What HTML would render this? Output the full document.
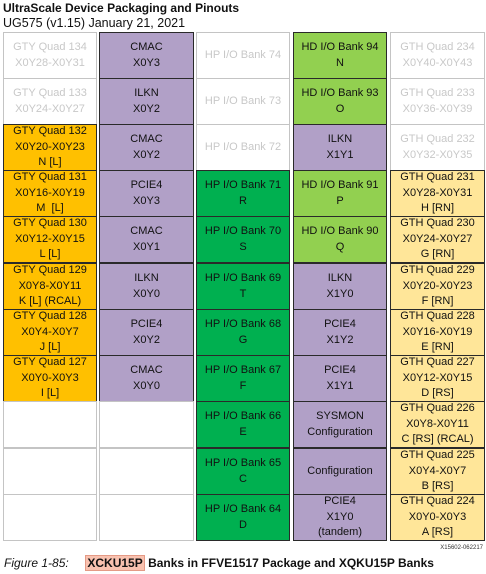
<!DOCTYPE html>
<html><head><meta charset="utf-8"><style>
body{margin:0;width:486px;height:574px;background:#fff;position:relative;overflow:hidden;font-family:"Liberation Sans",Arial,sans-serif}
.h1{position:absolute;left:3px;top:1px;font-size:12px;font-weight:bold;color:#111}
.h2{position:absolute;left:3px;top:16px;font-size:12.5px;color:#111}
.c{position:absolute;box-sizing:border-box;display:flex;flex-direction:column;align-items:center;justify-content:center;text-align:center;font-size:11px;line-height:15.5px;color:#111;border:1.5px solid #2a2a2a}
.w{background:#fff;border:1px solid #c4c4c4;color:#c8c8c8}
.o{background:#FFC000}.p{background:#B1A0C7}.g{background:#00B050}.lg{background:#92D050}.y{background:#FFE699}
.c1{left:3px;width:94px}.c2{left:99px;width:95px}.c3{left:196px;width:94px}.c4{left:293px;width:94px}.c5{left:390px;width:95px}
.r0{top:32px;height:47px}.r1{top:78px;height:47px}.r2{top:124px;height:47px}.r3{top:170px;height:47px}.r4{top:216px;height:47px}.r5{top:263px;height:47px}.r6{top:309px;height:47px}.r7{top:355px;height:47px}.r8{top:401px;height:47px}.r9{top:448px;height:47px}.r10{top:494px;height:47px}
.small{position:absolute;right:3px;top:545px;font-size:6px;color:#333}
.cap{position:absolute;left:4px;top:556px;font-size:12px;color:#111}
.cap i{font-style:italic}
.cap b{font-weight:bold}
.hl{background:#F9C2B0;border:1px solid #e49a86;padding:0 1px}
</style></head><body>
<div class="h1">UltraScale Device Packaging and Pinouts</div>
<div class="h2">UG575 (v1.15) January 21, 2021</div>

<div class="c w c1 r0">GTY Quad 134<br>X0Y28-X0Y31</div>
<div class="c w c1 r1">GTY Quad 133<br>X0Y24-X0Y27</div>
<div class="c o c1 r2">GTY Quad 132<br>X0Y20-X0Y23<br>N [L]</div>
<div class="c o c1 r3">GTY Quad 131<br>X0Y16-X0Y19<br>M&nbsp; [L]</div>
<div class="c o c1 r4">GTY Quad 130<br>X0Y12-X0Y15<br>L [L]</div>
<div class="c o c1 r5">GTY Quad 129<br>X0Y8-X0Y11<br>K [L] (RCAL)</div>
<div class="c o c1 r6">GTY Quad 128<br>X0Y4-X0Y7<br>J [L]</div>
<div class="c o c1 r7">GTY Quad 127<br>X0Y0-X0Y3<br>I [L]</div>
<div class="c w c1 r8"></div><div class="c w c1 r9"></div><div class="c w c1 r10"></div>

<div class="c p c2 r0">CMAC<br>X0Y3</div>
<div class="c p c2 r1">ILKN<br>X0Y2</div>
<div class="c p c2 r2">CMAC<br>X0Y2</div>
<div class="c p c2 r3">PCIE4<br>X0Y3</div>
<div class="c p c2 r4">CMAC<br>X0Y1</div>
<div class="c p c2 r5">ILKN<br>X0Y0</div>
<div class="c p c2 r6">PCIE4<br>X0Y2</div>
<div class="c p c2 r7">CMAC<br>X0Y0</div>
<div class="c w c2 r8"></div><div class="c w c2 r9"></div><div class="c w c2 r10"></div>

<div class="c w c3 r0">HP I/O Bank 74</div>
<div class="c w c3 r1">HP I/O Bank 73</div>
<div class="c w c3 r2">HP I/O Bank 72</div>
<div class="c g c3 r3">HP I/O Bank 71<br>R</div>
<div class="c g c3 r4">HP I/O Bank 70<br>S</div>
<div class="c g c3 r5">HP I/O Bank 69<br>T</div>
<div class="c g c3 r6">HP I/O Bank 68<br>G</div>
<div class="c g c3 r7">HP I/O Bank 67<br>F</div>
<div class="c g c3 r8">HP I/O Bank 66<br>E</div>
<div class="c g c3 r9">HP I/O Bank 65<br>C</div>
<div class="c g c3 r10">HP I/O Bank 64<br>D</div>

<div class="c lg c4 r0">HD I/O Bank 94<br>N</div>
<div class="c lg c4 r1">HD I/O Bank 93<br>O</div>
<div class="c p c4 r2">ILKN<br>X1Y1</div>
<div class="c lg c4 r3">HD I/O Bank 91<br>P</div>
<div class="c lg c4 r4">HD I/O Bank 90<br>Q</div>
<div class="c p c4 r5">ILKN<br>X1Y0</div>
<div class="c p c4 r6">PCIE4<br>X1Y2</div>
<div class="c p c4 r7">PCIE4<br>X1Y1</div>
<div class="c p c4 r8">SYSMON<br>Configuration</div>
<div class="c p c4 r9">Configuration</div>
<div class="c p c4 r10">PCIE4<br>X1Y0<br>(tandem)</div>

<div class="c w c5 r0">GTH Quad 234<br>X0Y40-X0Y43</div>
<div class="c w c5 r1">GTH Quad 233<br>X0Y36-X0Y39</div>
<div class="c w c5 r2">GTH Quad 232<br>X0Y32-X0Y35</div>
<div class="c y c5 r3">GTH Quad 231<br>X0Y28-X0Y31<br>H [RN]</div>
<div class="c y c5 r4">GTH Quad 230<br>X0Y24-X0Y27<br>G [RN]</div>
<div class="c y c5 r5">GTH Quad 229<br>X0Y20-X0Y23<br>F [RN]</div>
<div class="c y c5 r6">GTH Quad 228<br>X0Y16-X0Y19<br>E [RN]</div>
<div class="c y c5 r7">GTH Quad 227<br>X0Y12-X0Y15<br>D [RS]</div>
<div class="c y c5 r8">GTH Quad 226<br>X0Y8-X0Y11<br>C [RS] (RCAL)</div>
<div class="c y c5 r9">GTH Quad 225<br>X0Y4-X0Y7<br>B [RS]</div>
<div class="c y c5 r10">GTH Quad 224<br>X0Y0-X0Y3<br>A [RS]</div>

<div class="small">X15602-062217</div>
<div class="cap"><i>Figure 1-85:</i>&nbsp;&nbsp;&nbsp;&nbsp; <b><span class="hl">XCKU15P</span> Banks in FFVE1517 Package and XQKU15P Banks</b></div>
</body></html>
